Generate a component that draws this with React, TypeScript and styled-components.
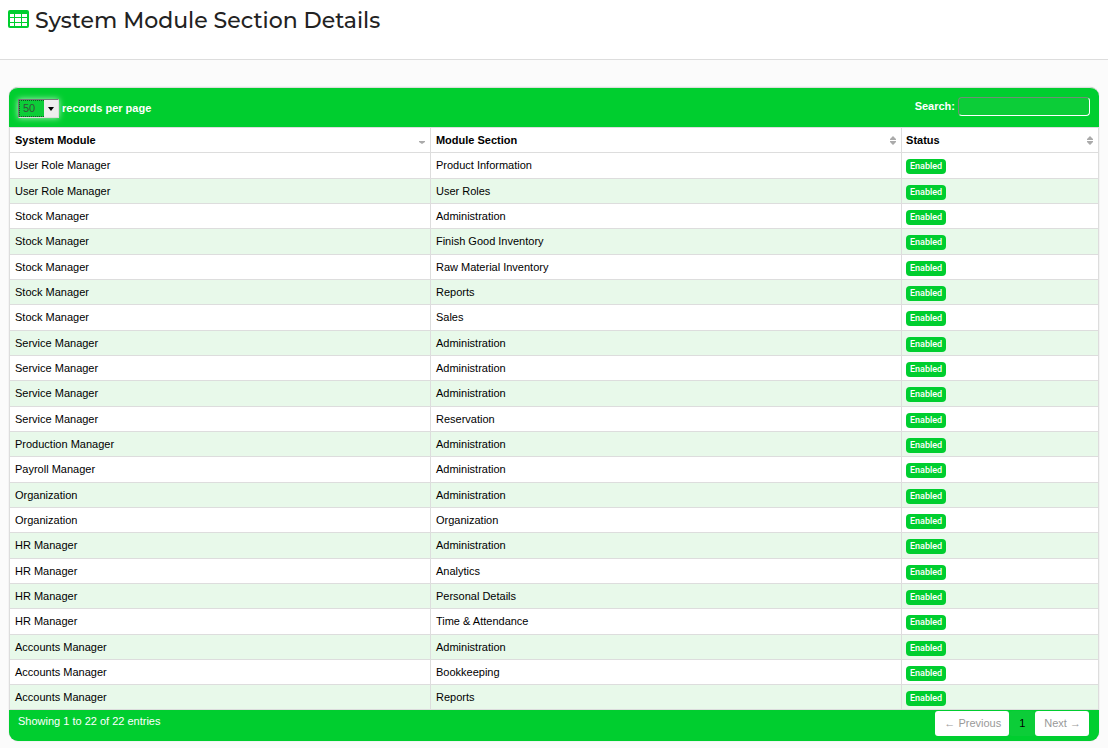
import React from "react";
import styled, { createGlobalStyle } from "styled-components";

const GREEN = "#00ce2f";
const LINE = "#dddddd";

const GlobalStyle = createGlobalStyle`
  * { box-sizing: border-box; }
  body {
    margin: 0;
    background: #fbfbfb;
    color: #000;
    font: 11px/15px "Liberation Sans", Arial, Helvetica, sans-serif;
  }
`;

const PageHeader = styled.header`
  display: flex;
  align-items: flex-start;
  gap: 6px;
  height: 60px;
  padding: 7px 8px 0;
  background: #fff;
  border-bottom: 1px solid ${LINE};
`;

const TitleIcon = styled.svg`
  width: 21px;
  height: 18px;
  margin-top: 3px;
`;

const Title = styled.h1`
  margin: 0;
  font: 500 22px/28px Montserrat, Inter, sans-serif;
  color: #222;
`;

const Panel = styled.main`
  margin: 27px 9px 7px;
  border-top: 1px solid ${LINE};
  border-radius: 9px;
  background: ${GREEN};
  box-shadow: 0 0 1px rgba(0, 0, 0, 0.3);
  overflow: hidden;
`;

const Toolbar = styled.div`
  display: flex;
  justify-content: space-between;
  align-items: flex-start;
  height: 39px;
  padding: 9px 9px 0;
  color: #fff;
  font-weight: bold;
`;

const Field = styled.label`
  display: flex;
  align-items: center;
  gap: 3px;
`;

const LengthField = styled(Field)`
  padding-top: 2px;
`;

const SelectWrap = styled.span`
  position: relative;
  display: flex;
  border: 1px solid;
  border-color: #777 #ddd #ddd #777;
  box-shadow: 0 0 6px rgba(255, 255, 255, 0.7);
`;

const LengthSelect = styled.select`
  appearance: none;
  width: 39px;
  height: 17px;
  padding: 0 3px;
  border: 1px dotted #194d24;
  border-radius: 0;
  outline: none;
  background: #0ccd38;
  color: #37503b;
  font: 11px/15px "Liberation Sans", Arial, sans-serif;
`;

const SelectArrow = styled.svg`
  position: absolute;
  top: 0;
  right: 0;
  width: 14px;
  height: 17px;
  pointer-events: none;
`;

const SearchInput = styled.input`
  width: 132px;
  height: 19px;
  padding: 0 5px;
  border: 1px solid;
  border-color: #6f8f75 #fff #fff #6f8f75;
  border-radius: 4px;
  outline: none;
  background: #0ccd38;
  font: inherit;
`;

const Table = styled.table`
  width: 100%;
  table-layout: fixed;
  border-collapse: separate;
  border-spacing: 0;
  border: solid ${LINE};
  border-width: 0 1px;
  background: #fff;
`;

const HeadCell = styled.th<{ $width?: string }>`
  width: ${(p) => p.$width ?? "auto"};
  height: 26px;
  padding: 5px 5px 0;
  border-top: 1px solid ${LINE};
  border-bottom: 1px solid ${LINE};
  border-left: 1px solid ${LINE};
  text-align: left;
  vertical-align: top;
  &:first-child { border-left: 0; }
  &:last-child { padding-left: 4px; }
`;

const HeadContent = styled.div`
  display: flex;
  justify-content: space-between;
  align-items: center;
`;

const SortIcon = styled.svg`
  width: 6px;
  height: 9px;
`;

const Row = styled.tr`
  height: 25px;
  &:nth-child(3n + 1):not(:last-child) { height: 26px; }
  &:nth-child(even) { background: #e8f9ea; }
`;

const Cell = styled.td`
  padding: 5px 5px 0;
  border-bottom: 1px solid ${LINE};
  border-left: 1px solid ${LINE};
  vertical-align: top;
  &:first-child { border-left: 0; }
  &:last-child { padding-left: 4px; }
`;

const Badge = styled.span`
  display: block;
  width: 40px;
  height: 15px;
  margin-top: 1px;
  border-radius: 4px;
  background: ${GREEN};
  color: #fff;
  font: 500 9px/14px Roboto, "Liberation Sans", sans-serif;
  text-align: center;
`;

const Footer = styled.footer`
  display: flex;
  justify-content: space-between;
  align-items: flex-start;
  height: 31px;
  padding: 0 10px 0 9px;
  color: #fff;
`;

const Summary = styled.p`
  margin: 4px 0 0;
`;

const Pager = styled.nav`
  display: flex;
  padding-top: 1px;
`;

const PageButton = styled.button<{ $current?: boolean }>`
  height: 25px;
  padding: ${(p) => (p.$current ? "0 10px" : "0 8px 0 9px")};
  border: 0;
  border-radius: 3px;
  background: ${(p) => (p.$current ? "#0ccd38" : "#fff")};
  color: ${(p) => (p.$current ? "#000" : "#999")};
  font: inherit;
`;

const rows: [string, string][] = [
  ["User Role Manager", "Product Information"],
  ["User Role Manager", "User Roles"],
  ["Stock Manager", "Administration"],
  ["Stock Manager", "Finish Good Inventory"],
  ["Stock Manager", "Raw Material Inventory"],
  ["Stock Manager", "Reports"],
  ["Stock Manager", "Sales"],
  ["Service Manager", "Administration"],
  ["Service Manager", "Administration"],
  ["Service Manager", "Administration"],
  ["Service Manager", "Reservation"],
  ["Production Manager", "Administration"],
  ["Payroll Manager", "Administration"],
  ["Organization", "Administration"],
  ["Organization", "Organization"],
  ["HR Manager", "Administration"],
  ["HR Manager", "Analytics"],
  ["HR Manager", "Personal Details"],
  ["HR Manager", "Time & Attendance"],
  ["Accounts Manager", "Administration"],
  ["Accounts Manager", "Bookkeeping"],
  ["Accounts Manager", "Reports"],
];

const columns: { label: string; width?: string; sorted?: boolean }[] = [
  { label: "System Module", width: "38.6%", sorted: true },
  { label: "Module Section", width: "43.3%" },
  { label: "Status" },
];

function SortMark({ sorted }: { sorted?: boolean }) {
  return (
    <SortIcon viewBox="0 0 6 9" fill="#aaa" aria-hidden="true">
      {sorted ? (
        <path d="M0 5h6v1L3 8 0 6z" />
      ) : (
        <path d="M0 4V3l3-3 3 3v1zM0 5h6v1L3 9 0 6z" />
      )}
    </SortIcon>
  );
}

export default function App() {
  return (
    <>
      <GlobalStyle />
      <PageHeader>
        <TitleIcon viewBox="0 0 21 18" aria-hidden="true">
          <rect width="21" height="18" rx="2" fill={GREEN} />
          <path
            fill="#fff"
            d="M2 4h4v3H2zM7 4h6v3H7zM14 4h5v3h-5zM2 8h4v4H2zM7 8h6v4H7zM14 8h5v4h-5zM2 13h4v3H2zM7 13h6v3H7zM14 13h5v3h-5z"
          />
        </TitleIcon>
        <Title>System Module Section Details</Title>
      </PageHeader>
      <Panel>
        <Toolbar>
          <LengthField>
            <SelectWrap>
              <LengthSelect defaultValue="50">
                <option>10</option>
                <option>25</option>
                <option>50</option>
                <option>100</option>
              </LengthSelect>
              <SelectArrow viewBox="0 0 14 17" aria-hidden="true">
                <path fill="#eee" d="M0 0h14v17H0z" />
                <path fill="#000" d="M4 7h6l-3 4z" />
              </SelectArrow>
            </SelectWrap>
            records per page
          </LengthField>
          <Field>
            Search:
            <SearchInput type="text" />
          </Field>
        </Toolbar>
        <Table>
          <thead>
            <tr>
              {columns.map((c) => (
                <HeadCell key={c.label} scope="col" $width={c.width}>
                  <HeadContent>
                    {c.label}
                    <SortMark sorted={c.sorted} />
                  </HeadContent>
                </HeadCell>
              ))}
            </tr>
          </thead>
          <tbody>
            {rows.map(([module, section], i) => (
              <Row key={i}>
                <Cell>{module}</Cell>
                <Cell>{section}</Cell>
                <Cell>
                  <Badge>Enabled</Badge>
                </Cell>
              </Row>
            ))}
          </tbody>
        </Table>
        <Footer>
          <Summary>Showing 1 to 22 of 22 entries</Summary>
          <Pager aria-label="Pagination">
            <PageButton type="button">← Previous</PageButton>
            <PageButton type="button" $current>1</PageButton>
            <PageButton type="button">Next →</PageButton>
          </Pager>
        </Footer>
      </Panel>
    </>
  );
}
